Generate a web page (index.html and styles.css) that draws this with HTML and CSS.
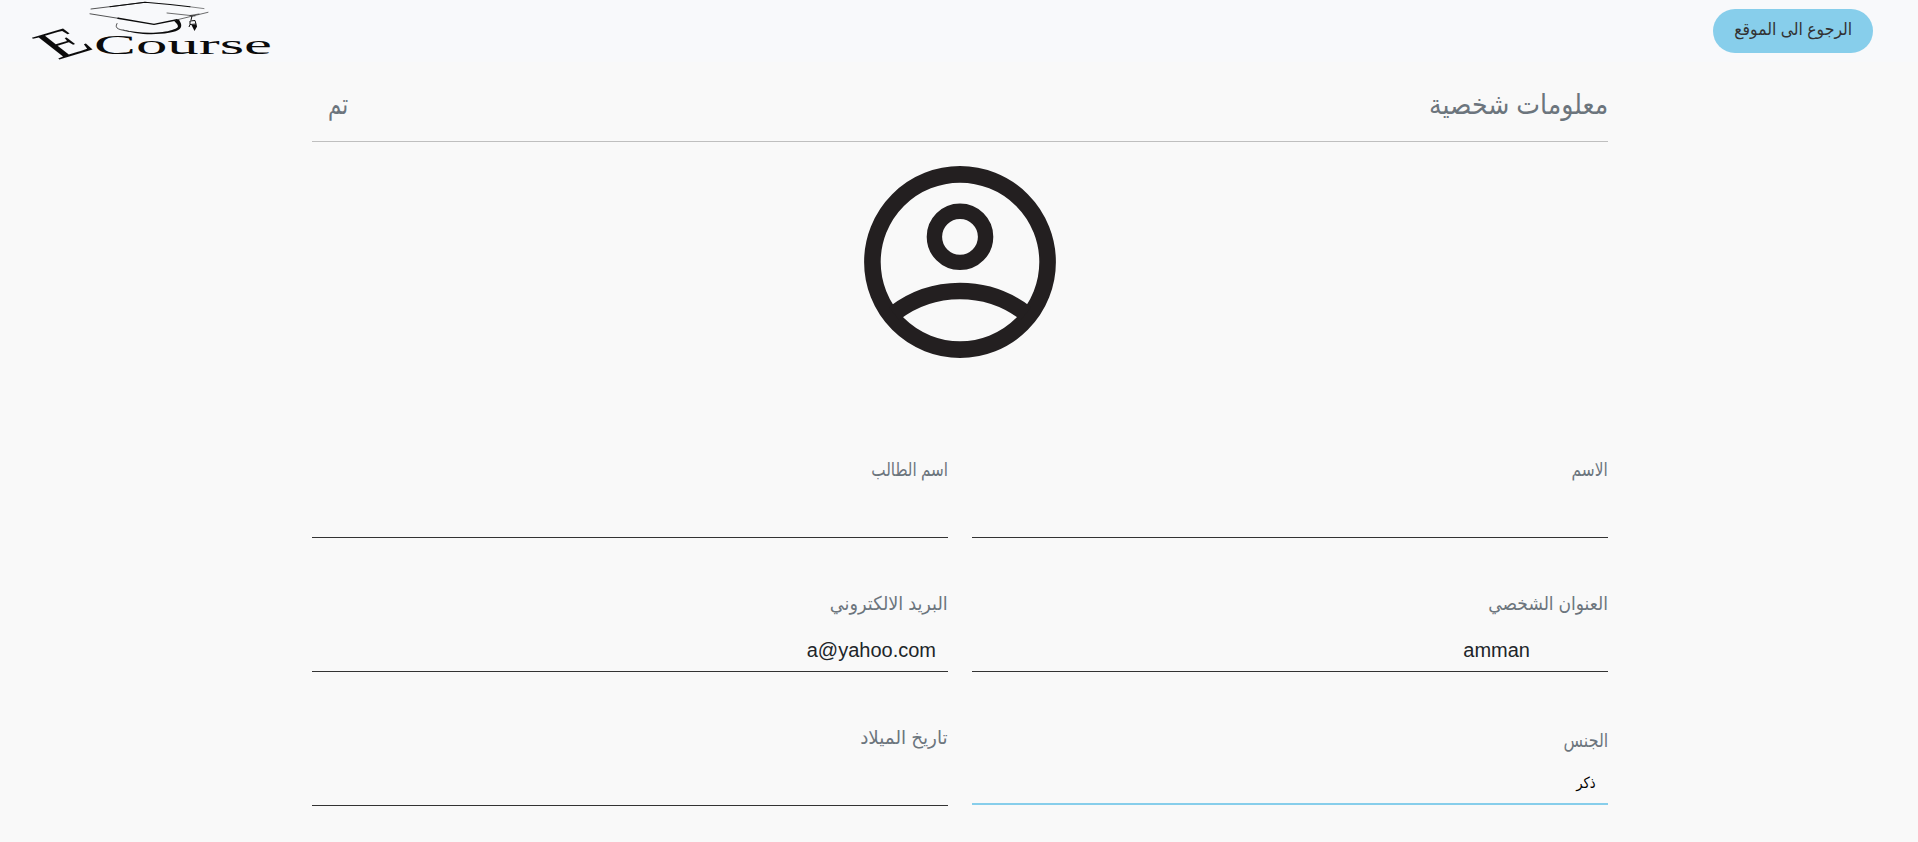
FILE: index.html
```html
<!DOCTYPE html>
<html lang="ar" dir="rtl">
<head>
<meta charset="utf-8">
<title>ECourse</title>
<link rel="stylesheet" href="styles.css">
</head>
<body>
<header class="navbar">
  <a class="back-button"><span class="text text-back">الرجوع الى الموقع</span></a>
  <svg class="logo" width="300" height="62" viewBox="0 0 300 62" role="img" aria-label="ECourse">
    <g fill="none" stroke="#0b0b0b" stroke-linecap="round" stroke-linejoin="round">
      <path d="M91 9 L145 2.3" stroke-width=".7"/>
      <path d="M110 6.7 L145 2.3 L170 4.5 L190 6.8" stroke-width="1.1"/>
      <path d="M190 6.8 L204 8.6" stroke-width=".5"/>
      <path d="M90 13.8 L120 18.6" stroke-width=".7"/>
      <path d="M118 18.3 L154 24.4 L177 19.8" stroke-width="1.4"/>
      <path d="M177 19.8 L208 12.3" stroke-width=".6"/>
      <path d="M167 13 L195 16 M190 15.5 L199 14" stroke-width=".6"/>
      <path d="M117 23.5 C114 29 119 29.5 129 31.5" stroke-width=".7"/>
    </g>
    <path fill="#0b0b0b" d="M121 29 C138 34 162 33.5 172 30 C178 28 179 27 177 24 L174 20.7 L179 19.5 C180 22 182 24 181 27 C180 30 176 31.5 169 32.8 C153 35.5 134 34.5 121 29Z"/>
    <path fill="none" stroke="#0b0b0b" stroke-width="1" d="M192 16 L191 20 M190 21 L195 20.5 L196 24 L190 24.5Z M190 24.5 L189 27 M196 24 L196.5 27"/>
    <path fill="#0b0b0b" d="M191.5 25 L196 24.5 L196.5 27.5 L194.5 31Z"/>
    <text class="logo-text" transform="matrix(2.12 -.64 1.4 1.1 57.5 60)" font-size="30">E</text>
    <text class="logo-text" x="94" y="54" font-size="28" textLength="178" lengthAdjust="spacingAndGlyphs">Course</text>
  </svg>
</header>
<main class="profile">
  <div class="heading">
    <h1 class="title"><span class="text text-title">معلومات شخصية</span></h1>
    <a class="title done"><span class="text text-done">تم</span></a>
  </div>
  <svg class="avatar" width="192" height="192" viewBox="0 0 192 192" fill="none" stroke="#231f20">
    <circle cx="96" cy="96" r="87.6" stroke-width="16.6"/>
    <circle cx="96" cy="70.8" r="25.6" stroke-width="15.4"/>
    <path d="M30 147.5 A108 108 0 0 1 162 147.5" stroke-width="16.4"/>
  </svg>
  <form class="fields">
    <div class="field"><label><span class="text text-name">الاسم</span></label><div class="value"></div></div>
    <div class="field"><label><span class="text text-student">اسم الطالب</span></label><div class="value"></div></div>
    <div class="field"><label><span class="text text-address">العنوان الشخصي</span></label><div class="value value-address">amman</div></div>
    <div class="field"><label><span class="text text-email">البريد الالكتروني</span></label><div class="value">a@yahoo.com</div></div>
    <div class="field field-gender"><label><span class="text text-gender">الجنس</span></label><div class="value"><span class="text text-male">ذكر</span></div></div>
    <div class="field"><label><span class="text text-birth">تاريخ الميلاد</span></label><div class="value"></div></div>
  </form>
</main>
</body>
</html>
```
FILE: styles.css
```css
* { box-sizing: border-box; }
body {
  margin: 0;
  height: 842px;
  overflow: hidden;
  background: #f9f9f9;
  color: #212529;
  font-family: "Liberation Sans", "DejaVu Sans", sans-serif;
}
.navbar {
  display: flex;
  justify-content: space-between;
  align-items: flex-start;
  height: 62px;
  padding-right: 45px;
  background: #f8f9fb;
}
.back-button {
  display: flex;
  justify-content: center;
  align-items: center;
  width: 160px;
  height: 44px;
  margin-top: 9px;
  padding-bottom: 3px;
  border-radius: 22px;
  background: #87ceeb;
  color: #333;
}
.logo { display: block; overflow: visible; }
.logo-text { font-family: "Liberation Serif", serif; fill: #0b0b0b; direction: ltr; text-anchor: start; }

/* Condensed Arabic lettering */
.text { display: inline-block; white-space: nowrap; transform-origin: right; }
.text-back { font-size: 16px; transform: scale(.98, 1.08); transform-origin: center; }
.text-title { transform: scaleX(.9); }
.text-done { transform: scaleX(.76); transform-origin: left; }
.text-name { transform: scaleX(.81); }
.text-student { transform: scaleX(.8); }
.text-address { transform: scaleX(.9); }
.text-email { transform: scaleX(.93); }
.text-gender { transform: scaleX(.84); }
.text-birth { transform: scaleX(.965); }
.text-male { transform: scale(.94, 1.1); }

.profile { width: 1296px; margin: 0 310px 0 312px; }
.heading {
  display: flex;
  justify-content: space-between;
  height: 80px;
  padding: 23px 0 0 16px;
  border-bottom: 1px solid #bfbfbf;
}
.title { margin: 0; font-size: 28px; line-height: 40px; font-weight: 400; color: #6c757d; }
.avatar { display: block; margin: 24px auto 0; }
.fields {
  display: grid;
  grid-template-columns: 1fr 1fr;
  column-gap: 24px;
  row-gap: 46px;
  margin-top: 92px;
}
.field { height: 88px; border-bottom: 1px solid #333; }
.field label { display: block; height: 40px; line-height: 39px; font-size: 19px; color: #6c757d; }
.value { height: 47px; padding-right: 12px; font-size: 20px; line-height: 52px; }
.value-address { padding-right: 78px; }
.field-gender { height: 87px; padding-top: 3px; border-bottom: 2px solid #87ceeb; }
.field-gender .value { font-size: 14px; line-height: 45px; color: #000; }
```
